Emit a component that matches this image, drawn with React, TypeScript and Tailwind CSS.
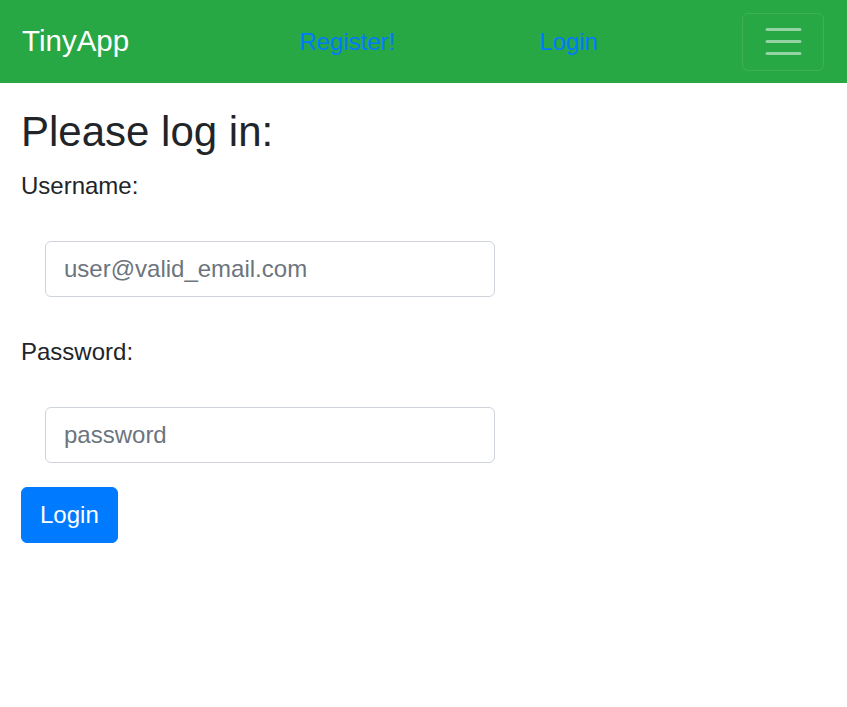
export default function App() {
  return (
    <div className="min-h-screen bg-white text-[#212529]" style={{ fontFamily: '"Liberation Sans", Arial, sans-serif' }}>
      {/* Navbar */}
      <nav className="flex h-[83px] items-center bg-[#28a745] pl-[22px] pr-[23px]">
        <a className="text-[29.5px] leading-[1.5] text-white">TinyApp</a>
        <a className="ml-[170px] text-[24px] leading-[1.5] text-[#007bff]">Register!</a>
        <a className="ml-[144px] text-[24px] leading-[1.5] text-[#007bff]">Login</a>
        <button className="ml-auto flex h-[58px] w-[82px] items-center justify-center rounded-[6px] border border-white/10">
          <svg width="45" height="45" viewBox="0 0 30 30">
            <path d="M4 7h22M4 15h22M4 23h22" stroke="rgba(255,255,255,0.5)" strokeWidth="2" strokeLinecap="round" />
          </svg>
        </button>
      </nav>

      {/* Form */}
      <main className="pl-[19px] pt-[24px]">
        <h3 className="mb-[11px] pl-[2px] text-[42px] font-normal leading-[1.2]">Please log in:</h3>
        <form className="flex flex-col items-start">
          <label className="pl-[2px] text-[24px] leading-[1.5]">Username:</label>
          <input
            type="text"
            placeholder="user@valid_email.com"
            className="ml-[26px] mt-[37px] h-[56px] w-[450px] rounded-[6px] border border-[#ced4da] px-[18px] text-[24px] placeholder:text-[#6c757d]"
          />
          <label className="mt-[37px] pl-[2px] text-[24px] leading-[1.5]">Password:</label>
          <input
            type="password"
            placeholder="password"
            className="ml-[26px] mt-[37px] h-[56px] w-[450px] rounded-[6px] border border-[#ced4da] px-[18px] text-[24px] placeholder:text-[#6c757d]"
          />
          <button
            type="button"
            className="ml-[2px] mt-[24px] h-[56px] rounded-[6px] border border-[#007bff] bg-[#007bff] px-[18px] text-[24px] leading-[1.5] text-white"
          >
            Login
          </button>
        </form>
      </main>
    </div>
  );
}
